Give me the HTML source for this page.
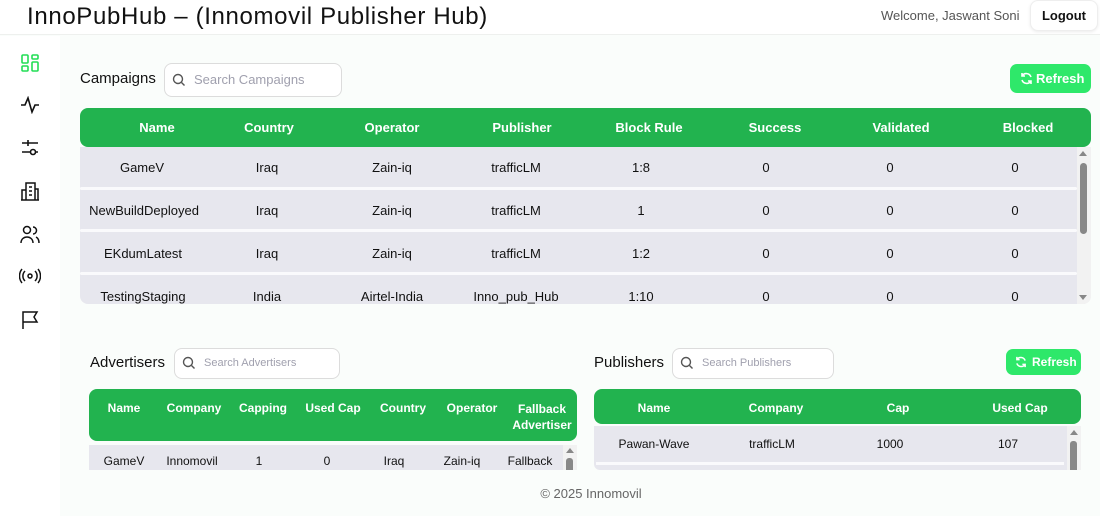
<!DOCTYPE html>
<html><head><meta charset="utf-8"><style>
*{margin:0;padding:0;box-sizing:border-box}
body{width:1100px;height:516px;overflow:hidden;background:#fafdfb;font-family:"Liberation Sans",sans-serif;position:relative;color:#111}
.a{position:absolute}
.c{position:absolute;transform:translateX(-50%);white-space:nowrap}
.hdr{left:0;top:0;width:1100px;height:35px;background:#fff;border-bottom:1px solid #eef0ee}
.side{left:0;top:36px;width:60px;height:480px;background:#fff}
.green{background:#22b34f;border-radius:8px}
.th{color:#fff;font-weight:bold;font-size:13px}
.td{font-size:13px;color:#111}
.search{background:#fff;border:1px solid #dcdcdc;border-radius:8px;color:#a0a0ae}
.btn{background:#2ee86a;border-radius:7px;color:#fff;font-weight:bold}
svg{position:absolute}
</style></head><body>
<div class="a hdr"></div>
<div class="a" style="left:27px;top:3px;font-size:24px;letter-spacing:0.65px;color:#111">InnoPubHub – (Innomovil Publisher Hub)</div>
<div class="a" style="left:881px;top:8px;font-size:13px;color:#555">Welcome, Jaswant Soni</div>
<div class="a" style="left:1030px;top:0;width:68px;height:31px;background:#fff;border:1px solid #eee;border-radius:8px;box-shadow:0 1px 3px rgba(0,0,0,.08);font-size:13px;font-weight:bold;text-align:center;line-height:30px">Logout</div>
<div class="a side"></div>
<svg style="left:21px;top:54px" width="18" height="18" viewBox="0 0 18 18" fill="none" stroke="#22dd55" stroke-width="1.6"><rect x="1" y="1" width="6" height="8" rx="1"/><rect x="11" y="1" width="6" height="4" rx="1"/><rect x="1" y="12" width="6" height="5" rx="1"/><rect x="11" y="8" width="6" height="9" rx="1"/></svg>
<svg style="left:20px;top:96px" width="20" height="18" viewBox="0 0 20 18" fill="none" stroke="#111" stroke-width="1.6"><path d="M1 9h4l3-7 4 14 3-7h4"/></svg>
<svg style="left:21px;top:139px" width="18" height="18" viewBox="0 0 18 18" fill="none" stroke="#111" stroke-width="1.6"><path d="M1 4h16M7 1v6M1 13h8M15 13h2"/><circle cx="12" cy="13" r="2.5"/></svg>
<svg style="left:20px;top:181px" width="20" height="20" viewBox="0 0 20 20" fill="none" stroke="#111" stroke-width="1.5"><path d="M6 19V2h9v17M2 19V9h4M15 8h3v11M1 19h18M9 6h3M9 10h3M9 14h3"/></svg>
<svg style="left:20px;top:225px" width="20" height="19" viewBox="0 0 20 19" fill="none" stroke="#111" stroke-width="1.5"><circle cx="7" cy="5" r="3.5"/><path d="M1 18c0-4 3-6 6-6s6 2 6 6M13 2a3.5 3.5 0 0 1 0 7M16 12c2 1 3 3 3 6"/></svg>
<svg style="left:19px;top:268px" width="22" height="16" viewBox="0 0 22 16" fill="none" stroke="#111" stroke-width="1.5"><circle cx="11" cy="8" r="2"/><path d="M6 3a7 7 0 0 0 0 10M16 3a7 7 0 0 1 0 10M3 1a11 11 0 0 0 0 14M19 1a11 11 0 0 1 0 14"/></svg>
<svg style="left:21px;top:310px" width="18" height="20" viewBox="0 0 18 20" fill="none" stroke="#111" stroke-width="1.5"><path d="M2 19V2h14l-3 5 3 5H2"/></svg>

<div class="a" style="left:80px;top:70px;font-size:15px">Campaigns</div>
<div class="a search" style="left:164px;top:63px;width:178px;height:34px"></div>
<svg style="left:172px;top:73px" width="14" height="14" viewBox="0 0 14 14" fill="none" stroke="#555" stroke-width="1.4"><circle cx="6" cy="6" r="4.5"/><path d="M9.5 9.5l3 3"/></svg>
<div class="a" style="left:194px;top:72px;font-size:13px;color:#a0a0ae">Search Campaigns</div>
<div class="a btn" style="left:1010px;top:64px;width:81px;height:29px;font-size:13px;line-height:29px;padding-left:26px">Refresh</div>
<svg style="left:1020px;top:72px" width="13" height="13" viewBox="0 0 13 13" fill="none" stroke="#fff" stroke-width="1.6"><path d="M11 5A5 5 0 0 0 2 4M2 1v3h3M2 8a5 5 0 0 0 9 1M11 12V9H8"/></svg>

<div class="a green" style="left:80px;top:108px;width:1011px;height:39px"></div>
<div class="c th" style="left:157px;top:120px">Name</div>
<div class="c th" style="left:269px;top:120px">Country</div>
<div class="c th" style="left:392px;top:120px">Operator</div>
<div class="c th" style="left:522px;top:120px">Publisher</div>
<div class="c th" style="left:649px;top:120px">Block Rule</div>
<div class="c th" style="left:775px;top:120px">Success</div>
<div class="c th" style="left:901px;top:120px">Validated</div>
<div class="c th" style="left:1028px;top:120px">Blocked</div>

<div class="a" style="left:80px;top:147px;width:1011px;height:157px;background:#e7e7ee;border-radius:0 0 8px 8px;overflow:hidden">
 <div class="a" style="left:0;top:40px;width:997px;height:3px;background:#fafafc;border-radius:2px"></div>
 <div class="a" style="left:0;top:82px;width:997px;height:3px;background:#fafafc;border-radius:2px"></div>
 <div class="a" style="left:0;top:125px;width:997px;height:3px;background:#fafafc;border-radius:2px"></div>
 <div class="a" style="left:997px;top:0;width:14px;height:157px;background:#f2f2f2"></div>
 <div class="a" style="left:1000px;top:16px;width:7px;height:71px;background:#888;border-radius:4px"></div>
 <div class="a" style="left:999px;top:4px;width:0;height:0;border-left:4px solid transparent;border-right:4px solid transparent;border-bottom:5px solid #888"></div>
 <div class="a" style="left:999px;top:148px;width:0;height:0;border-left:4px solid transparent;border-right:4px solid transparent;border-top:5px solid #888"></div>
</div>
<div class="c td" style="left:142px;top:160px">GameV</div><div class="c td" style="left:267px;top:160px">Iraq</div><div class="c td" style="left:392px;top:160px">Zain-iq</div><div class="c td" style="left:516px;top:160px">trafficLM</div><div class="c td" style="left:641px;top:160px">1:8</div><div class="c td" style="left:766px;top:160px">0</div><div class="c td" style="left:890px;top:160px">0</div><div class="c td" style="left:1015px;top:160px">0</div>
<div class="c td" style="left:144px;top:203px">NewBuildDeployed</div><div class="c td" style="left:267px;top:203px">Iraq</div><div class="c td" style="left:392px;top:203px">Zain-iq</div><div class="c td" style="left:516px;top:203px">trafficLM</div><div class="c td" style="left:641px;top:203px">1</div><div class="c td" style="left:766px;top:203px">0</div><div class="c td" style="left:890px;top:203px">0</div><div class="c td" style="left:1015px;top:203px">0</div>
<div class="c td" style="left:143px;top:246px">EKdumLatest</div><div class="c td" style="left:267px;top:246px">Iraq</div><div class="c td" style="left:392px;top:246px">Zain-iq</div><div class="c td" style="left:516px;top:246px">trafficLM</div><div class="c td" style="left:641px;top:246px">1:2</div><div class="c td" style="left:766px;top:246px">0</div><div class="c td" style="left:890px;top:246px">0</div><div class="c td" style="left:1015px;top:246px">0</div>
<div class="c td" style="left:143px;top:289px">TestingStaging</div><div class="c td" style="left:267px;top:289px">India</div><div class="c td" style="left:392px;top:289px">Airtel-India</div><div class="c td" style="left:516px;top:289px">Inno_pub_Hub</div><div class="c td" style="left:641px;top:289px">1:10</div><div class="c td" style="left:766px;top:289px">0</div><div class="c td" style="left:890px;top:289px">0</div><div class="c td" style="left:1015px;top:289px">0</div>

<div class="a" style="left:90px;top:354px;font-size:15px">Advertisers</div>
<div class="a search" style="left:174px;top:348px;width:166px;height:31px"></div>
<svg style="left:182px;top:356px" width="14" height="14" viewBox="0 0 14 14" fill="none" stroke="#555" stroke-width="1.4"><circle cx="6" cy="6" r="4.5"/><path d="M9.5 9.5l3 3"/></svg>
<div class="a" style="left:204px;top:357px;font-size:11px;color:#a0a0ae">Search Advertisers</div>
<div class="a green" style="left:89px;top:389px;width:488px;height:52px"></div>
<div class="c th" style="left:124px;top:401px;font-size:12px">Name</div>
<div class="c th" style="left:194px;top:401px;font-size:12px">Company</div>
<div class="c th" style="left:263px;top:401px;font-size:12px">Capping</div>
<div class="c th" style="left:333px;top:401px;font-size:12px">Used Cap</div>
<div class="c th" style="left:403px;top:401px;font-size:12px">Country</div>
<div class="c th" style="left:472px;top:401px;font-size:12px">Operator</div>
<div class="c th" style="left:542px;top:401px;font-size:12px;text-align:center;line-height:16px">Fallback<br>Advertiser</div>
<div class="a" style="left:89px;top:445px;width:474px;height:25px;background:#e7e7ee"></div>
<div class="a" style="left:563px;top:445px;width:14px;height:25px;background:#f2f2f2"></div>
<div class="a" style="left:566px;top:458px;width:7px;height:12px;background:#888;border-radius:3px 3px 0 0"></div>
<div class="a" style="left:566px;top:448px;border-left:4px solid transparent;border-right:4px solid transparent;border-bottom:5px solid #888"></div>
<div class="c td" style="left:124px;top:454px;font-size:12px">GameV</div><div class="c td" style="left:192px;top:454px;font-size:12px">Innomovil</div><div class="c td" style="left:259px;top:454px;font-size:12px">1</div><div class="c td" style="left:327px;top:454px;font-size:12px">0</div><div class="c td" style="left:394px;top:454px;font-size:12px">Iraq</div><div class="c td" style="left:462px;top:454px;font-size:12px">Zain-iq</div><div class="c td" style="left:530px;top:454px;font-size:12px">Fallback</div>

<div class="a" style="left:594px;top:354px;font-size:15px">Publishers</div>
<div class="a search" style="left:672px;top:348px;width:162px;height:31px"></div>
<svg style="left:680px;top:356px" width="14" height="14" viewBox="0 0 14 14" fill="none" stroke="#555" stroke-width="1.4"><circle cx="6" cy="6" r="4.5"/><path d="M9.5 9.5l3 3"/></svg>
<div class="a" style="left:702px;top:357px;font-size:11px;color:#a0a0ae">Search Publishers</div>
<div class="a btn" style="left:1006px;top:349px;width:75px;height:26px;font-size:12px;line-height:26px;padding-left:26px">Refresh</div>
<svg style="left:1015px;top:356px" width="12" height="12" viewBox="0 0 13 13" fill="none" stroke="#fff" stroke-width="1.6"><path d="M11 5A5 5 0 0 0 2 4M2 1v3h3M2 8a5 5 0 0 0 9 1M11 12V9H8"/></svg>
<div class="a green" style="left:594px;top:389px;width:487px;height:35px"></div>
<div class="c th" style="left:654px;top:401px;font-size:12px">Name</div>
<div class="c th" style="left:776px;top:401px;font-size:12px">Company</div>
<div class="c th" style="left:898px;top:401px;font-size:12px">Cap</div>
<div class="c th" style="left:1020px;top:401px;font-size:12px">Used Cap</div>
<div class="a" style="left:594px;top:426px;width:473px;height:44px;background:#e7e7ee;border-radius:0 0 0 6px"></div>
<div class="a" style="left:596px;top:462px;width:468px;height:3px;background:#fafafc"></div>
<div class="a" style="left:1067px;top:426px;width:14px;height:44px;background:#f2f2f2"></div>
<div class="a" style="left:1070px;top:441px;width:7px;height:29px;background:#888;border-radius:3px 3px 0 0"></div>
<div class="a" style="left:1070px;top:430px;border-left:4px solid transparent;border-right:4px solid transparent;border-bottom:5px solid #888"></div>
<div class="c td" style="left:654px;top:437px;font-size:12px">Pawan-Wave</div><div class="c td" style="left:772px;top:437px;font-size:12px">trafficLM</div><div class="c td" style="left:890px;top:437px;font-size:12px">1000</div><div class="c td" style="left:1008px;top:437px;font-size:12px">107</div>

<div class="c" style="left:591px;top:486px;font-size:13px;color:#666">© 2025 Innomovil</div>
</body></html>
